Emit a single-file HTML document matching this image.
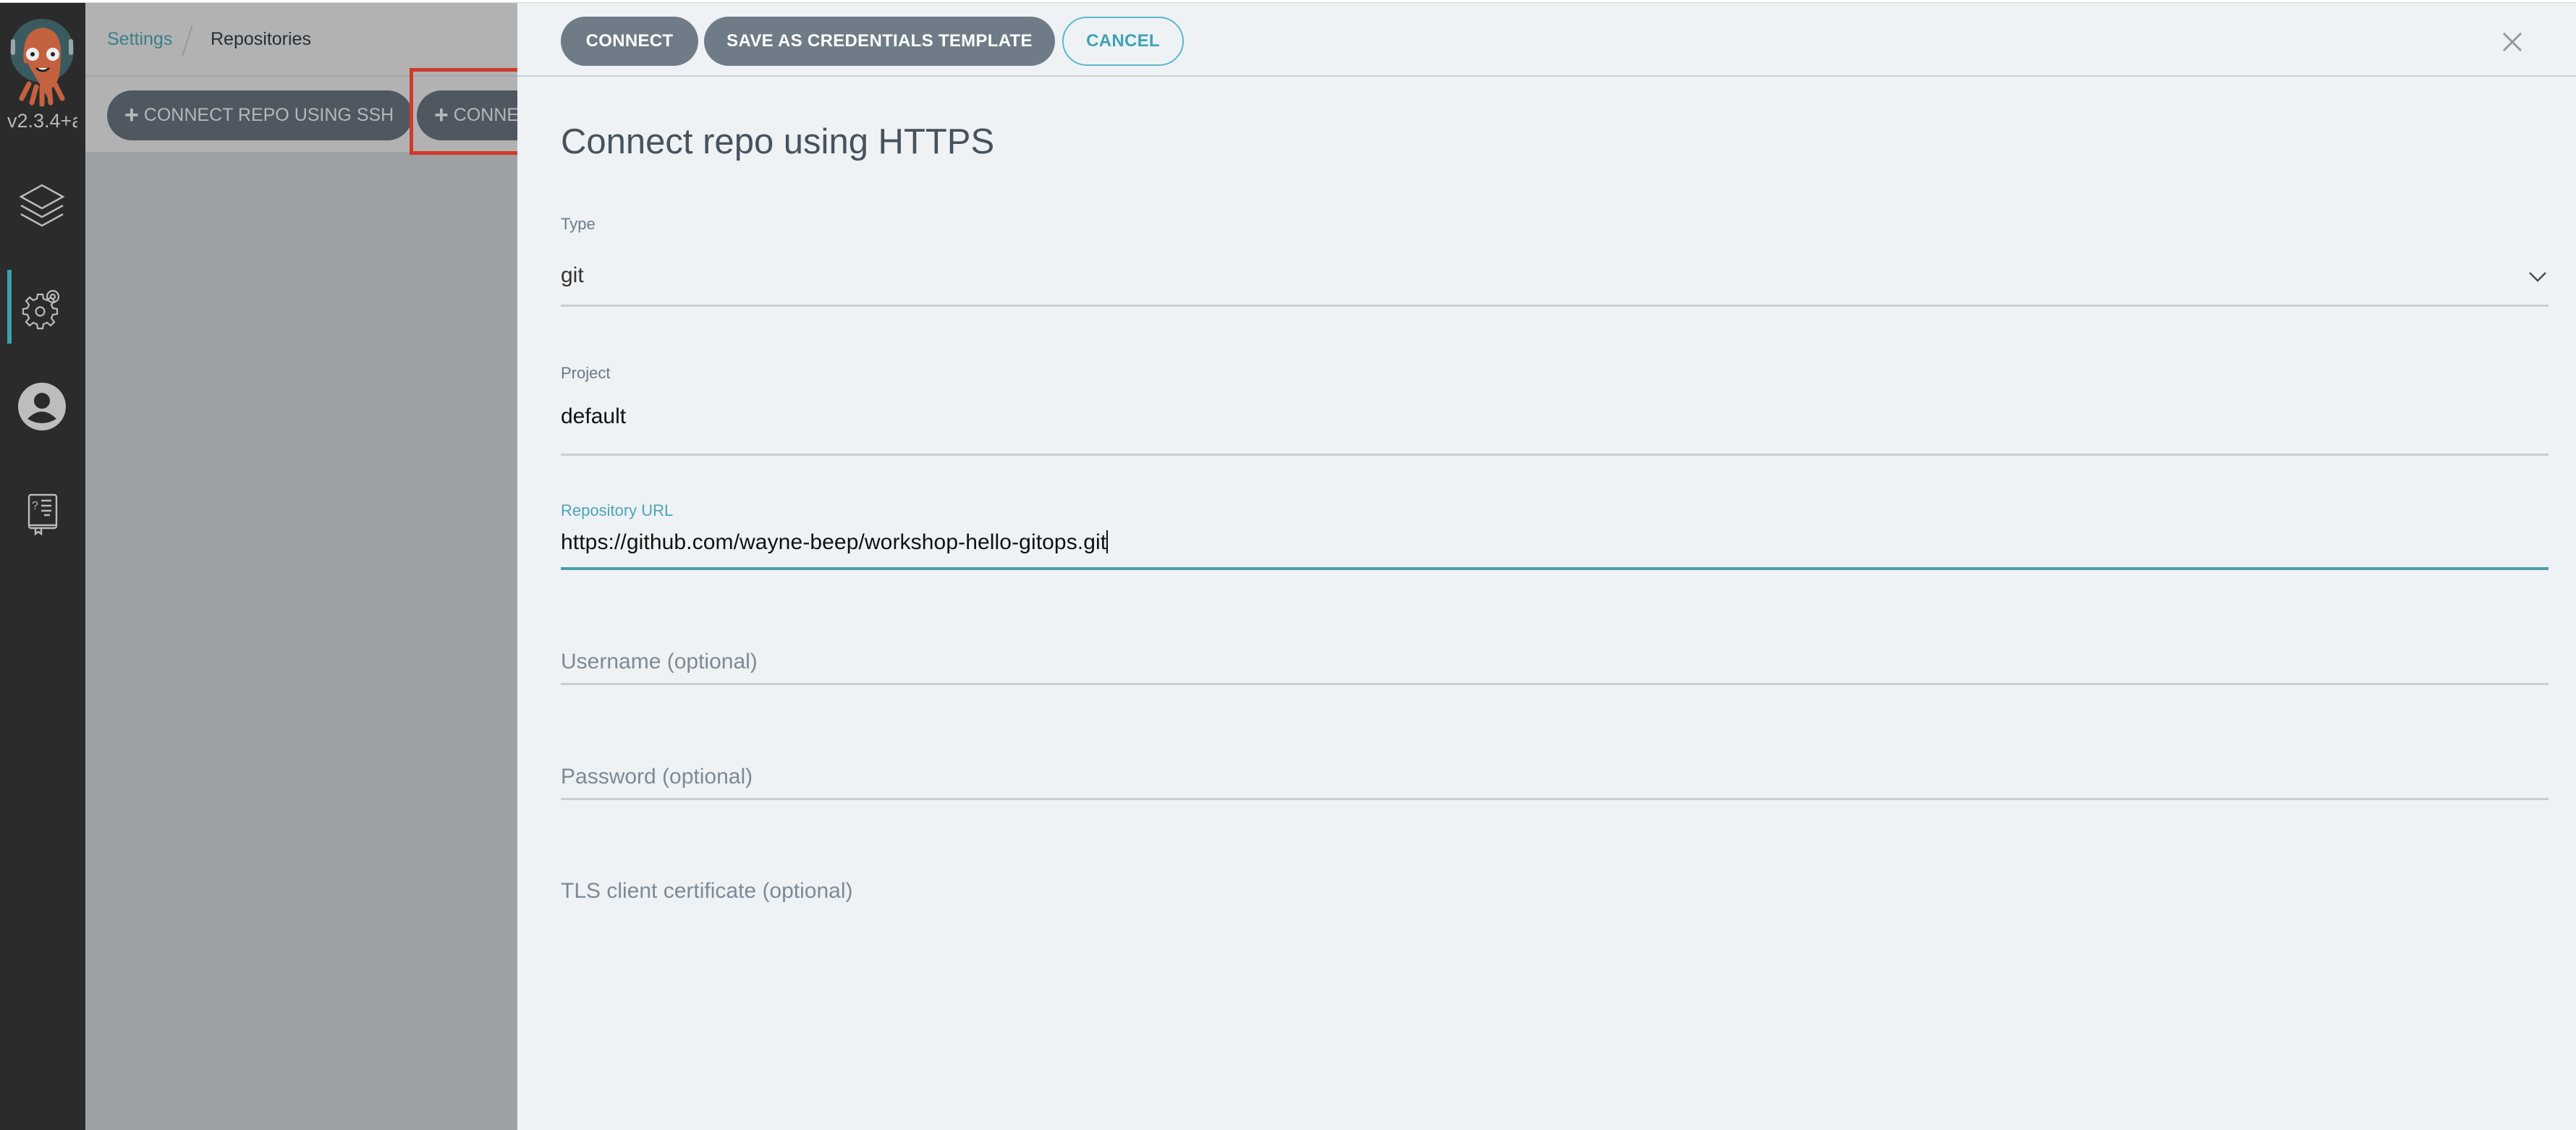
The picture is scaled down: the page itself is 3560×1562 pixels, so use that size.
<!DOCTYPE html>
<html><head><meta charset="utf-8"><style>
*{margin:0;padding:0;box-sizing:border-box}
body{width:3560px;height:1562px;overflow:hidden;background:#fff;font-family:"Liberation Sans",sans-serif;position:relative}
.abs{position:absolute}
#side{left:0;top:4px;width:118px;height:1558px;background:#2b2b2b}
#main{left:118px;top:4px;width:597px;height:1558px;background:#9da1a4}
#mainhead{left:118px;top:4px;width:597px;height:206px;background:#b2b2b2}
.pill{position:absolute;background:#4f5861;color:#b4b8bb;border-radius:40px;font-size:25px;height:69px;line-height:69px;white-space:nowrap;overflow:hidden}
#panel{left:715px;top:4px;width:2845px;height:1558px;background:#eef2f5}
.btn{position:absolute;top:23px;height:68px;line-height:68px;border-radius:34px;font-size:24px;text-align:center;font-weight:bold;letter-spacing:0.3px}
.label{position:absolute;left:775px;font-size:22px;color:#6c7a86}
.val{position:absolute;left:775px;font-size:30px;color:#111}
.ph{position:absolute;left:775px;font-size:30px;color:#7d8a95}
.line{position:absolute;left:775px;width:2747px;height:3px;background:#cccccc}
</style></head><body>
<div class="abs" style="left:0;top:0;width:3560px;height:4px;background:#fff"></div>
<div class="abs" style="left:0;top:3px;width:3560px;height:2px;background:#dcdcdc"></div>
<div id="side" class="abs"></div>
<svg class="abs" style="left:10px;top:24px" width="96" height="124" viewBox="0 0 96 124">
<circle cx="48" cy="46" r="44" fill="#3b5a60"/>
<rect x="5" y="30" width="6" height="22" rx="3" fill="#9aa6ab"/><rect x="85" y="30" width="6" height="22" rx="3" fill="#9aa6ab"/>
<path d="M26 60 Q24 18 50 18 Q74 20 70 60 Q70 90 58 96 L60 118 M40 96 L34 118 M48 96 L48 120 M30 92 L20 112 M66 92 L76 112" stroke="#c4613f" stroke-width="7" fill="#c4613f" stroke-linecap="round"/>
<circle cx="35" cy="51" r="9" fill="#eee"/><circle cx="63" cy="51" r="9" fill="#eee"/>
<circle cx="35" cy="51" r="3" fill="#222"/><circle cx="63" cy="51" r="3" fill="#222"/>
<path d="M40 70 Q49 78 58 70" stroke="#222" stroke-width="3" fill="#fff"/>
</svg>
<div class="abs" style="left:10px;top:152px;font-size:27px;color:#b8b8b8;width:97px;overflow:hidden;white-space:nowrap">v2.3.4+a</div>
<svg class="abs" style="left:26px;top:252px" width="64" height="66" viewBox="0 0 64 66" fill="none" stroke="#bbb" stroke-width="2.5">
<path d="M32 4 L61 20 L32 36 L3 20 Z"/><path d="M3 32 L32 48 L61 32"/><path d="M3 44 L32 60 L61 44"/>
</svg>
<div class="abs" style="left:10px;top:373px;width:6px;height:102px;background:#3f9fb0"></div>
<svg class="abs" style="left:28px;top:398px" width="60" height="60" viewBox="0 0 60 60" fill="none" stroke="#bbb" stroke-width="2.2">
<path d="M25 12 L32 12 L33 18 L38 20 L43 16 L48 21 L44 26 L46 31 L52 32 L52 39 L46 40 L44 45 L48 50 L43 55 L38 51 L33 53 L32 59 L25 59 L24 53 L19 51 L14 55 L9 50 L13 45 L11 40 L5 39 L5 32 L11 31 L13 26 L9 21 L14 16 L19 20 L24 18 Z" transform="translate(-1 -3)"/>
<circle cx="27.5" cy="32.5" r="6"/><circle cx="45" cy="12" r="8"/><circle cx="45" cy="12" r="3"/>
</svg>
<svg class="abs" style="left:25px;top:529px" width="66" height="66" viewBox="0 0 66 66">
<circle cx="33" cy="33" r="33" fill="#bdbdbd"/><circle cx="33" cy="25" r="11" fill="#2b2b2b"/><path d="M13 50 Q33 30 53 50 Q33 62 13 50Z" fill="#2b2b2b"/>
</svg>
<svg class="abs" style="left:37px;top:682px" width="44" height="58" viewBox="0 0 44 58" fill="none" stroke="#bbb" stroke-width="2.4">
<rect x="3" y="2" width="38" height="46" rx="3"/><path d="M3 44 L41 44 M12 48 L12 56 L16 53 L20 56 L20 48"/>
<text x="7" y="22" font-size="16" fill="#bbb" stroke="none" font-family="Liberation Sans">?</text>
<path d="M20 10 H34 M20 17 H34 M20 24 H34 M24 30 H32"/>
</svg>
<div id="main" class="abs"></div>
<div id="mainhead" class="abs"></div>
<div class="abs" style="left:118px;top:104px;width:597px;height:2px;background:#a5a5a5"></div>
<div class="abs" style="left:148px;top:40px;font-size:25px;color:#3c7f8c">Settings</div>
<div class="abs" style="left:258px;top:34px;width:2px;height:44px;background:#999;transform:rotate(18deg)"></div>
<div class="abs" style="left:291px;top:40px;font-size:25px;color:#26303a">Repositories</div>
<div class="pill" style="left:148px;top:125px;width:422px;padding-left:24px"><b style="font-size:34px;vertical-align:-3px">+</b> CONNECT REPO USING SSH</div>
<div class="pill" style="left:576px;top:125px;width:139px;padding-left:24px;border-radius:40px 0 0 40px"><b style="font-size:34px;vertical-align:-3px">+</b> CONNECT</div>
<div class="abs" style="left:566px;top:94px;width:179px;height:120px;border:5px solid #d0392b"></div>
<div id="panel" class="abs"></div>
<div class="btn" style="left:775px;width:190px;background:#6f7c87;color:#fff">CONNECT</div>
<div class="btn" style="left:973px;width:485px;background:#6f7c87;color:#fff">SAVE AS CREDENTIALS TEMPLATE</div>
<div class="btn" style="left:1468px;width:168px;border:2px solid #5bb8c9;color:#3fa3b4;line-height:64px">CANCEL</div>
<div class="abs" style="left:715px;top:104px;width:2845px;height:2px;background:#c8cfd4"></div>
<svg class="abs" style="left:3458px;top:44px" width="28" height="28" viewBox="0 0 28 28" stroke="#8e9ba5" stroke-width="3"><path d="M2 2 L26 26 M26 2 L2 26"/></svg>
<div class="abs" style="left:775px;top:168px;font-size:49px;color:#47525c">Connect repo using HTTPS</div>
<div class="label" style="top:297px">Type</div>
<div class="val" style="top:364px;color:#333">git</div>
<svg class="abs" style="left:3494px;top:375px" width="26" height="16" viewBox="0 0 26 16" fill="none" stroke="#444e57" stroke-width="2.5"><path d="M2 2 L13 13 L24 2"/></svg>
<div class="line" style="top:421px"></div>
<div class="label" style="top:503px">Project</div>
<div class="val" style="top:559px">default</div>
<div class="line" style="top:627px"></div>
<div class="label" style="top:693px;color:#4aa5b6">Repository URL</div>
<div class="val" style="top:733px;letter-spacing:0.1px">https://github.com/wayne-beep/workshop-hello-gitops.git<span style="display:inline-block;width:2px;height:32px;background:#111;vertical-align:-6px"></span></div>
<div class="line" style="top:784px;height:4px;background:#4e9dab"></div>
<div class="ph" style="top:898px">Username (optional)</div>
<div class="line" style="top:944px"></div>
<div class="ph" style="top:1057px">Password (optional)</div>
<div class="line" style="top:1103px"></div>
<div class="ph" style="top:1215px">TLS client certificate (optional)</div>
</body></html>
